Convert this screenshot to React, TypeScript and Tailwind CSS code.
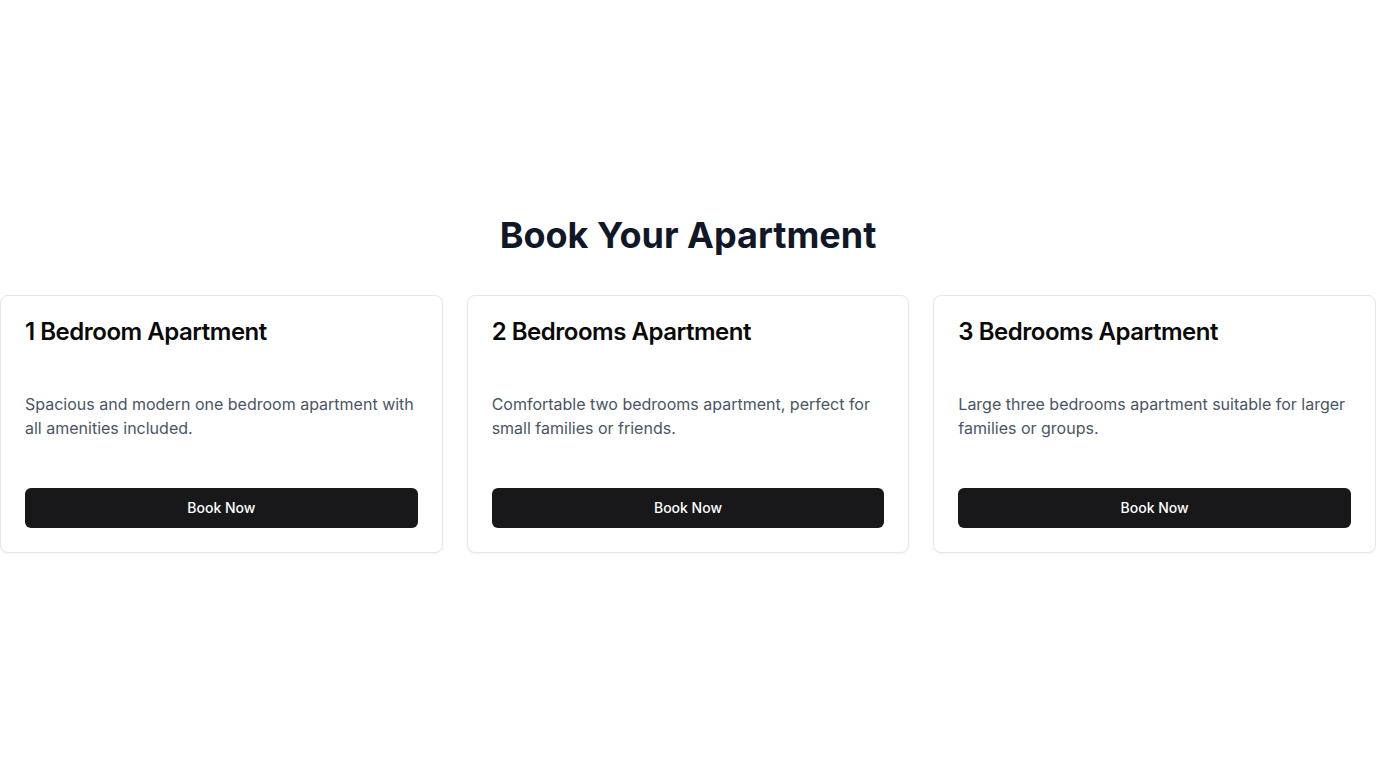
const apartments = [
    {
        id: 1,
        title: "1 Bedroom Apartment",
        description: "Spacious and modern one bedroom apartment with all amenities included.",
    },
    {
        id: 2,
        title: "2 Bedrooms Apartment",
        description: "Comfortable two bedrooms apartment, perfect for small families or friends.",
    },
    {
        id: 3,
        title: "3 Bedrooms Apartment",
        description: "Large three bedrooms apartment suitable for larger families or groups.",
    },
]

const App = () => {
    return (
        <div className="min-h-screen w-full bg-white flex flex-col items-center justify-center font-['Inter','Liberation_Sans',sans-serif]">
            <h1 className="text-4xl font-bold text-gray-900 mb-10">Book Your Apartment</h1>
            <div className="w-full grid grid-cols-3 gap-6">
                {apartments.map(apt => (
                    <div key={apt.id} className="rounded-lg border border-gray-200 bg-white shadow-xs flex flex-col">
                        <div className="p-6">
                            <h3 className="text-2xl font-semibold leading-none tracking-[-0.02em] text-[#0a0a0a]">{apt.title}</h3>
                        </div>
                        <div className="p-6">
                            <p className="text-base text-gray-600">{apt.description}</p>
                        </div>
                        <div className="p-6">
                            <button className="w-full h-10 rounded-md bg-[#18181b] text-white text-sm font-medium">Book Now</button>
                        </div>
                    </div>
                ))}
            </div>
        </div>
    )
}

export default App
